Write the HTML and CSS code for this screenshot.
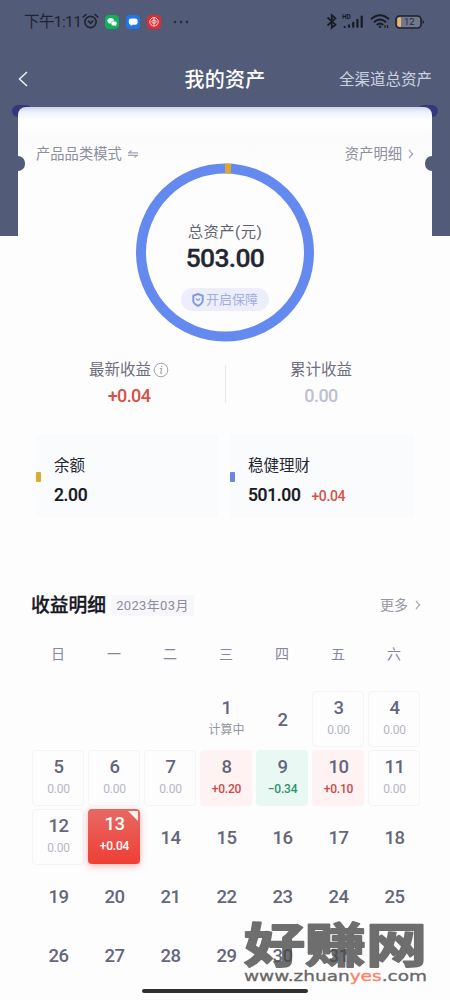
FILE: index.html
```html
<!DOCTYPE html>
<html lang="zh-CN">
<head>
<meta charset="utf-8">
<title>我的资产</title>
<link rel="stylesheet" href="styles.css">
</head>
<body>
<div class="screen">
  <div class="backdrop"></div>
  <header class="status">
    <span class="clock">下午1:11</span>
    <svg class="alarm" width="17" height="17" viewBox="0 0 17 17" fill="none" stroke="#20242f" stroke-width="1.6" stroke-linecap="round"><circle cx="8.5" cy="9" r="5.6"/><path d="M1.2 4 4 1.5M15.8 4 13 1.5M6.4 8.2 8.5 10.2 10.8 8.2"/></svg>
    <svg class="app" width="14" height="14" viewBox="0 0 14 14"><rect width="14" height="14" rx="4" fill="#12ae59"/><ellipse cx="5.7" cy="5.8" rx="3.3" ry="2.8" fill="#e9fff2"/><ellipse cx="9" cy="8.5" rx="3" ry="2.4" fill="#fff" stroke="#12ae59" stroke-width=".5"/><path d="m10 10 1 1.2.2-1.8" fill="#fff"/></svg>
    <svg class="app" width="14" height="14" viewBox="0 0 14 14"><rect width="14" height="14" rx="4" fill="#2176e4"/><rect x="2.8" y="3.5" width="8.8" height="6.2" rx="2.2" fill="#fff"/><path d="m5 9-.4 2 2.5-1.6" fill="#fff"/></svg>
    <svg class="app" width="14" height="14" viewBox="0 0 14 14" fill="none" stroke="#ffe5e3"><rect width="14" height="14" rx="4" fill="#dc2d35" stroke="none"/><circle cx="7" cy="6.8" r="4.2" stroke-width="1"/><rect x="5" y="5.3" width="4" height="2.7" rx=".8" stroke-width=".9"/><path d="M7 3v8" stroke-width=".9"/></svg>
    <svg class="dots" width="16" height="4" viewBox="0 0 16 4" fill="#242936"><circle cx="2" cy="2" r="1.2"/><circle cx="8" cy="2" r="1.2"/><circle cx="14" cy="2" r="1.2"/></svg>
    <svg class="bluetooth" width="12" height="17" viewBox="0 0 12 17" fill="none" stroke="#171b25" stroke-width="1.7"><path d="m1.5 4.5 8 7.2L5.7 15V2l3.8 3.3-8 7.2"/></svg>
    <svg class="signal" width="22" height="15" viewBox="0 0 22 15"><text x="0" y="5.2" class="hd">HD</text><g stroke="#171b25" stroke-width="2.2" stroke-linecap="round"><path d="M2.7 13v0M7 12.8v-1.5M11.2 12.8v-4M15.4 12.8v-7M19.7 12.8V2.7"/></g></svg>
    <svg class="wifi" width="20" height="15" viewBox="0 0 20 15" fill="none" stroke="#171b25" stroke-width="1.9"><path d="M1 5.3Q10-2.8 19 5.3M4 8.3Q10 2.7 16 8.3M6.8 11Q10 8 13.2 11"/><circle cx="10" cy="12.8" r="1.2" fill="#171b25" stroke="none"/><path d="M15 11v3M17.5 11v3" stroke-width="1.1"/></svg>
    <svg class="battery" width="30" height="14" viewBox="0 0 30 14"><rect x="1" y="1" width="25" height="12" rx="3.5" fill="#6f788c" stroke="#1c202b" stroke-width="1.6"/><path d="M6 2.2H4.6Q2.3 2.2 2.3 4.5v5q0 2.3 2.3 2.3H6Z" fill="#efb568"/><path d="M27.5 5q1.6.3 1.6 2t-1.6 2Z" fill="#1c202b"/><text x="9" y="10.3" class="level">12</text></svg>
  </header>
  <nav class="nav">
    <svg class="back" width="10" height="16" viewBox="0 0 10 16" fill="none" stroke="#eef0f6" stroke-width="1.5"><path d="M9 1 1.5 8 9 15"/></svg>
    <h1 class="nav-title">我的资产</h1>
    <a class="nav-link">全渠道总资产</a>
  </nav>

  <main class="card">
    <i class="corner corner-left"></i><i class="corner corner-right"></i>
    <div class="sheet">
      <i class="notch notch-left"></i><i class="notch notch-right"></i>
      <div class="modes">
        <span class="mode">产品品类模式<svg width="10" height="8" viewBox="0 0 10 8" fill="none" stroke="#a2a4b1" stroke-width="1.2"><path d="M0 2.8h10M0 5.3h10M1 2.8 3.5.5M9 5.3 6.5 7.5"/></svg></span>
        <span class="mode">资产明细<svg width="6" height="10" viewBox="0 0 6 10" fill="none" stroke="#a2a4b1" stroke-width="1.2"><path d="M1 .7Q2.3 3 4.7 5 2.3 7 1 9.3"/></svg></span>
      </div>
      <section class="ring">
        <svg class="ring-chart" width="180" height="180" viewBox="0 0 180 180" fill="none" stroke-width="10"><circle cx="90" cy="89.5" r="84" stroke="#6489ef"/><path d="M90 5.5Q93 5.4 96 5.7" stroke="#dba636"/></svg>
        <div class="total">
          <span class="total-label">总资产(元)</span>
          <strong class="total-value">503.00</strong>
          <span class="guard"><svg width="12" height="14" viewBox="0 0 12 14" fill="none" stroke="#8599dc" stroke-width="2"><path d="m6 1 4.7 1.8v5Q10.5 10.8 6 12.8 1.5 10.8 1.3 7.8v-5Z"/><path d="M4.2 5.5Q6 9 7.8 5.5" stroke-width="1.5"/></svg>开启保障</span>
        </div>
      </section>
      <section class="stats">
        <div class="stat"><span class="stat-label">最新收益<svg width="16" height="16" viewBox="0 0 16 16" fill="none" stroke="#a4a5ae"><circle cx="8" cy="8" r="6.8"/><path d="M6.8 6.5h1.8l-.9 4.8h1.3" stroke-width="1.1"/><circle cx="8.7" cy="4.4" r=".7" fill="#a4a5ae" stroke="none"/></svg></span><b class="stat-value up">+0.04</b></div>
        <div class="stat"><span class="stat-label">累计收益</span><b class="stat-value zero">0.00</b></div>
      </section>
      <section class="tiles">
        <div class="tile gold"><span class="tile-name">余额</span><div><b class="tile-value">2.00</b></div></div>
        <div class="tile blue"><span class="tile-name">稳健理财</span><div><b class="tile-value">501.00</b><b class="gain">+0.04</b></div></div>
      </section>
    </div>
  </main>

  <section class="income">
    <div class="income-head"><h2>收益明细</h2><span class="month">2023年03月</span><a class="more">更多<svg width="6" height="10" viewBox="0 0 6 10" fill="none" stroke="#a4a5b0" stroke-width="1.2"><path d="M1 .7Q2.3 3 4.7 5 2.3 7 1 9.3"/></svg></a></div>
    <div class="week"><span>日</span><span>一</span><span>二</span><span>三</span><span>四</span><span>五</span><span>六</span></div>
    <div class="days">
      <div class="day first"><b>1</b><small class="pending">计算中</small></div>
      <div class="day plain"><b>2</b></div>
      <div class="day box"><b>3</b><small>0.00</small></div>
      <div class="day box"><b>4</b><small>0.00</small></div>
      <div class="day box"><b>5</b><small>0.00</small></div>
      <div class="day box"><b>6</b><small>0.00</small></div>
      <div class="day box"><b>7</b><small>0.00</small></div>
      <div class="day profit"><b>8</b><small>+0.20</small></div>
      <div class="day loss"><b>9</b><small>−0.34</small></div>
      <div class="day profit"><b>10</b><small>+0.10</small></div>
      <div class="day box"><b>11</b><small>0.00</small></div>
      <div class="day box"><b>12</b><small>0.00</small></div>
      <div class="day selected"><b>13</b><small>+0.04</small></div>
      <div class="day plain"><b>14</b></div>
      <div class="day plain"><b>15</b></div>
      <div class="day plain"><b>16</b></div>
      <div class="day plain"><b>17</b></div>
      <div class="day plain"><b>18</b></div>
      <div class="day plain"><b>19</b></div>
      <div class="day plain"><b>20</b></div>
      <div class="day plain"><b>21</b></div>
      <div class="day plain"><b>22</b></div>
      <div class="day plain"><b>23</b></div>
      <div class="day plain"><b>24</b></div>
      <div class="day plain"><b>25</b></div>
      <div class="day plain"><b>26</b></div>
      <div class="day plain"><b>27</b></div>
      <div class="day plain"><b>28</b></div>
      <div class="day plain"><b>29</b></div>
      <div class="day plain"><b>30</b></div>
      <div class="day plain"><b>31</b></div>
    </div>
  </section>
  <div class="home-bar"></div>
  <svg class="watermark" width="190" height="90" viewBox="0 -18 190 90"><text class="mark-name" x="3" y="43" textLength="183" lengthAdjust="spacingAndGlyphs">好赚网</text><text class="mark-url" x="3" y="62" textLength="183" lengthAdjust="spacingAndGlyphs">www.zhuan<tspan class="mark-accent">yes</tspan>.com</text></svg>
</div>
</body>
</html>
```
FILE: styles.css
```css
* { box-sizing: border-box; }
body { margin: 0; background: #fdfdfe; font-family: Roboto, "Noto Sans CJK SC", sans-serif; }
.screen { position: relative; width: 450px; height: 1000px; overflow: hidden; background: #fdfdfe; }
.backdrop { position: absolute; inset: 0 0 auto; height: 236px; background: #525c78; }
.status, .nav, .card, .income { position: relative; }
svg { display: block; flex: none; }

.status { height: 43px; display: flex; align-items: center; padding: 0 25px 0 24px; }
.clock { width: 58px; padding-top: 1px; font: 15.5px/20px Roboto, "Noto Sans CJK SC", sans-serif; letter-spacing: -.6px; color: #20242f; white-space: nowrap; }
.app { margin-left: 7px; }
.alarm + .app { margin-left: 6px; }
.dots { margin-left: 12px; }
.bluetooth { margin-left: auto; }
.signal { margin-left: 4px; }
.wifi { margin-left: 6px; }
.battery { margin-left: 5px; }
.hd { font: 700 6.5px Roboto, sans-serif; fill: #171b25; }
.level { font: 9.5px Roboto, sans-serif; fill: #252b38; }

.nav { height: 64px; display: grid; grid-template-columns: 1fr auto 1fr; align-items: center; padding: 8px 18px 0; }
.nav-title { margin: 0; padding-top: 2px; font-size: 20px; line-height: 28px; font-weight: 500; letter-spacing: .2px; color: #fff; }
.nav-link { justify-self: end; padding-top: 2px; font-size: 15.5px; line-height: 24px; color: #cbd1e0; }

.card { padding: 0 18px; }
.sheet { position: relative; height: 431px; padding: 36px 18px 0; border-radius: 8px 8px 0 0; background: linear-gradient(#c9d4e9 0, #edf2fa 5px, #fefefe 13px, #fefefe 19px, #fbfbfc 27px, #fdfdfe 60px); }
.corner { position: absolute; top: -2px; width: 20px; height: 12px; border-radius: 6px; background: #373681; }
.corner-left { left: 12px; }
.corner-right { right: 12px; }
.notch { position: absolute; top: 49px; width: 14px; height: 15px; border-radius: 7px; background: #525c78; }
.notch-left { left: -7px; }
.notch-right { right: -7px; }
.modes { height: 20px; display: flex; justify-content: space-between; }
.mode { display: flex; align-items: center; gap: 6px; padding-top: 1px; font-size: 14.3px; line-height: 20px; color: #8e8f9c; }
.ring { height: 180px; display: grid; justify-content: center; }
.ring > * { grid-area: 1 / 1; }
.total { display: flex; flex-direction: column; align-items: center; padding-top: 57px; }
.total-label { font-size: 15.3px; line-height: 24px; color: #62636e; letter-spacing: .5px; }
.total-value { font-size: 26.5px; line-height: 28px; font-weight: 500; color: #242632; letter-spacing: -.7px; -webkit-text-stroke: .3px #242632; }
.guard { width: 88px; height: 23px; margin-top: 16px; display: flex; align-items: center; justify-content: center; gap: 2px; border-radius: 12px; background: #eceffb; font-size: 13px; line-height: 23px; color: #a2aee0; }
.stats { height: 68px; margin-top: 14px; display: grid; grid-template-columns: 1fr 1fr; }
.stat { display: flex; flex-direction: column; align-items: center; }
.stat:first-child { position: relative; padding-right: 3px; }
.stat:first-child::after { content: ""; position: absolute; right: -1px; top: 8px; width: 1px; height: 38px; background: #e8e9ef; }
.stat-label { display: flex; align-items: center; gap: 2px; padding-top: 1px; font-size: 15.5px; line-height: 24px; color: #6c6e7c; }
.stat-value { margin-top: 2px; font-size: 18px; line-height: 24px; font-weight: 500; letter-spacing: -.6px; }
.stat:last-child { padding-left: 3px; }
.up, .gain { color: #d65045; }
.zero { color: #bcc0cd; }
.tiles { margin-top: 9px; display: grid; grid-template-columns: 183px 184px; gap: 11px; }
.tile { position: relative; height: 84px; padding: 20px 0 0 18px; border-radius: 4px; background: #fafbfd; }
.tile::before { content: ""; position: absolute; left: 0; top: 38px; width: 5px; height: 10px; border-radius: 1px; background: #d9ac32; }
.blue::before { background: #6b86df; }
.tile-name { display: block; font-size: 15.5px; line-height: 24px; color: #262733; }
.tile-value { display: inline-block; margin-top: 5px; font-size: 17.5px; line-height: 24px; font-weight: 500; color: #171820; letter-spacing: -.35px; -webkit-text-stroke: .2px #171820; }
.gain { margin-left: 11px; font-size: 14px; font-weight: 500; letter-spacing: -.4px; }

.income { padding: 55px 28px 0 31px; }
.income-head { height: 24px; display: flex; align-items: center; }
.income-head h2 { margin: 0; padding-top: 2px; font-size: 18.8px; line-height: 24px; font-weight: 500; color: #161722; -webkit-text-stroke: .3px #161722; }
.month { margin-left: 5px; padding: 0 5px; font-size: 13px; line-height: 21px; color: #8b8d9c; background: #f6f6fb; letter-spacing: .35px; }
.more { margin-left: auto; padding-right: 1px; display: flex; align-items: center; gap: 7px; font-size: 14px; line-height: 22px; color: #9698a4; }
.week { height: 20px; margin: 27px 0 0 1px; display: grid; grid-template-columns: repeat(7, 52px); gap: 4px; text-align: center; font-size: 14px; line-height: 20px; color: #85879a; }
.days { margin: 27px 0 0 1px; display: grid; grid-template-columns: repeat(7, 52px); grid-auto-rows: 56px; gap: 3px 4px; }
.day { display: flex; flex-direction: column; align-items: center; padding: 5px 0 0 1px; border-radius: 4px; color: #64667a; }
.day b { font-size: 18.5px; line-height: 24px; font-weight: 500; letter-spacing: -.5px; }
.day small { margin-top: 1px; font-size: 12px; line-height: 18px; color: #b6b8c2; letter-spacing: -.2px; }
.first { grid-column: 4; }
.day .pending { color: #93949e; letter-spacing: 0; }
.plain { padding: 0 0 0 1px; justify-content: center; }
.plain b { padding-top: 2px; }
.box { border: 1px solid #f4f4f7; padding-top: 4px; }
.profit { background: #fef2f2; }
.profit small { color: #c94b48; font-weight: 500; }
.loss { background: #eaf8f4; }
.loss small { color: #29936c; font-weight: 500; }
.selected { position: relative; height: 55px; padding-top: 3px; background: linear-gradient(#e76964, #ef3e34); box-shadow: 0 2px 7px #ec6e6780; color: #fff; }
.selected small { color: #fff; font-weight: 500; }
.selected::after { content: ""; position: absolute; top: 2px; right: 2px; width: 10px; height: 10px; background: #fff3f1; clip-path: polygon(0 0, 100% 0, 100% 100%); }
.home-bar { position: absolute; left: 142px; top: 989px; width: 166px; height: 4px; border-radius: 2px; background: #303033; }
.watermark { position: absolute; left: 241px; top: 901px; }
.mark-name { font: 700 47px "Noto Sans CJK SC", sans-serif; fill: #4b4b4b; stroke: #4b4b4b; stroke-width: 1.8px; stroke-linejoin: round; opacity: .8; }
.mark-url { font: 14.5px "DejaVu Sans", sans-serif; fill: #686868; stroke: #686868; stroke-width: .3px; }
.mark-accent { fill: #ff8060; stroke: #ff8060; }
```
